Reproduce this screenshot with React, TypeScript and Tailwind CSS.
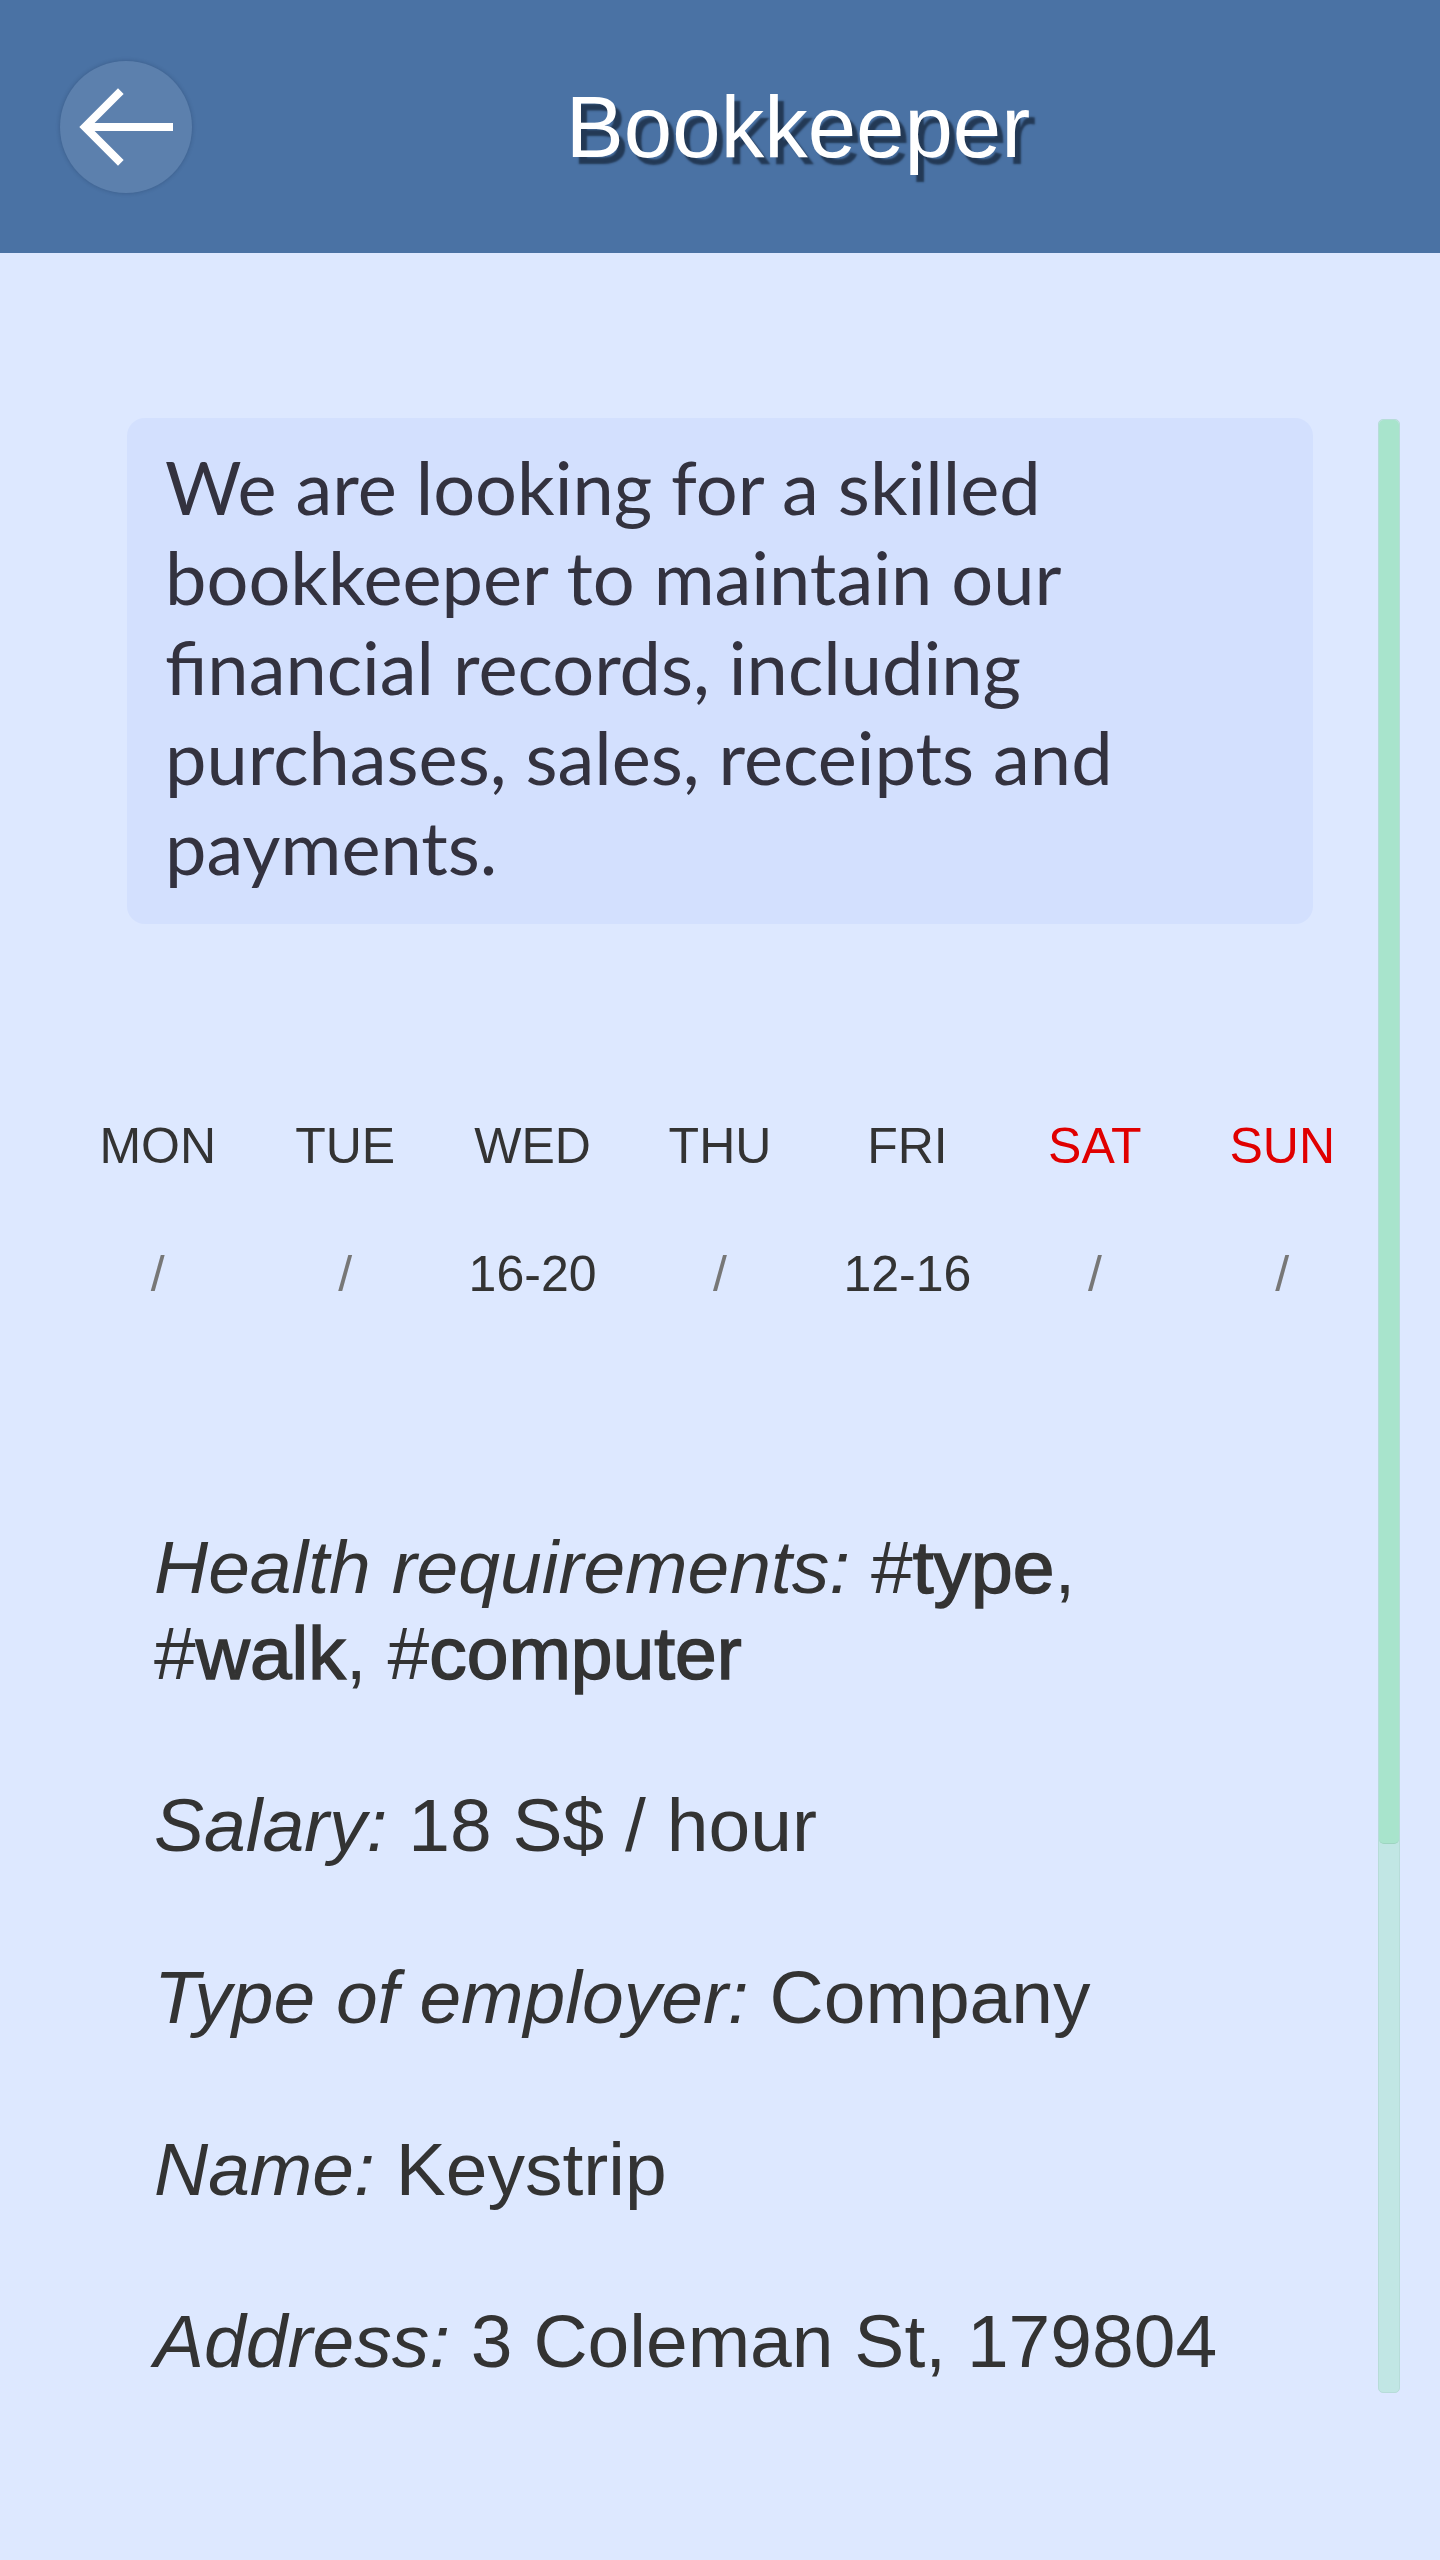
const DAYS = [
  { label: "MON", time: "/", weekend: false },
  { label: "TUE", time: "/", weekend: false },
  { label: "WED", time: "16-20", weekend: false },
  { label: "THU", time: "/", weekend: false },
  { label: "FRI", time: "12-16", weekend: false },
  { label: "SAT", time: "/", weekend: true },
  { label: "SUN", time: "/", weekend: true },
];

const TAGS = ["type", "walk", "computer"];

const DETAILS = [
  { label: "Salary:", value: "18 S$ / hour" },
  { label: "Type of employer:", value: "Company" },
  { label: "Name:", value: "Keystrip" },
  { label: "Address:", value: "3 Coleman St, 179804" },
];

function BackButton() {
  return (
    <button className="ml-[60px] flex h-[132px] w-[132px] shrink-0 items-center justify-center rounded-full bg-white/10 shadow-[0_0_4px_rgba(20,40,70,0.3)]">
      <svg viewBox="0 0 132 132" className="h-[132px] w-[132px]">
        <path d="M113 66H26" stroke="#fff" strokeWidth="8" fill="none" />
        <path d="M58 33L25 66L58 99" stroke="#fff" strokeWidth="8" fill="none" strokeLinecap="square" strokeLinejoin="miter" />
      </svg>
    </button>
  );
}

export default function App() {
  return (
    <div className="min-h-[2560px] bg-[#dde8ff] font-['Liberation_Sans',Arial,sans-serif]">
      <header className="flex h-[253px] items-center bg-[#4a72a4]">
        <BackButton />
        <h1 className="flex-1 pr-[36px] text-center text-[87px] leading-none text-white [text-shadow:6px_7px_2px_#233955]">
          Bookkeeper
        </h1>
      </header>

      <main className="flex pt-[165px] pl-[64px]">
        <div className="h-[1975px] w-[1312px] overflow-hidden">
          <div className="mx-[63px] rounded-[18px] bg-[#d3e0fe] pt-[24px] pr-[30px] pb-[32px] pl-[38px]">
            <p className="font-['Lato',sans-serif] text-[74px] leading-[90px] text-[#33323f]">
              We are looking for a skilled bookkeeper to maintain our financial records, including
              purchases, sales, receipts and payments.
            </p>
          </div>

          <div className="mt-[185px] grid grid-cols-7 text-center text-[50px] leading-[75px]">
            {DAYS.map((d) => (
              <span key={d.label} className={d.weekend ? "text-[#e00000]" : "text-[#333]"}>
                {d.label}
              </span>
            ))}
          </div>
          <div className="mt-[53px] grid grid-cols-7 text-center text-[50px] leading-[75px]">
            {DAYS.map((d) => (
              <span key={d.label} className={d.time === "/" ? "text-[#777]" : "text-[#333]"}>
                {d.time}
              </span>
            ))}
          </div>

          <div className="mt-[212px] flex flex-col gap-[86px] px-[90px] text-[75px] leading-[86px] text-[#333]">
            <p>
              <i>Health requirements:</i>{" "}
              {TAGS.map((tag, i) => (
                <span key={tag}>
                  #<span className="[-webkit-text-stroke:1.5px_#333]">{tag}</span>
                  {i < TAGS.length - 1 ? ", " : ""}
                </span>
              ))}
            </p>
            {DETAILS.map((item) => (
              <p key={item.label}>
                <i>{item.label}</i> {item.value}
              </p>
            ))}
          </div>
        </div>

        <div className="ml-[2px] mt-[1px] flex h-[1974px] w-[22px] flex-col overflow-hidden rounded-[5px] border border-[#b7dcd9] bg-[#c1e6e4]">
          <div className="h-[1424px] w-full rounded-[5px] border-b border-[#9dd4c0] bg-[#a8e4cc]" />
        </div>
      </main>
    </div>
  );
}
